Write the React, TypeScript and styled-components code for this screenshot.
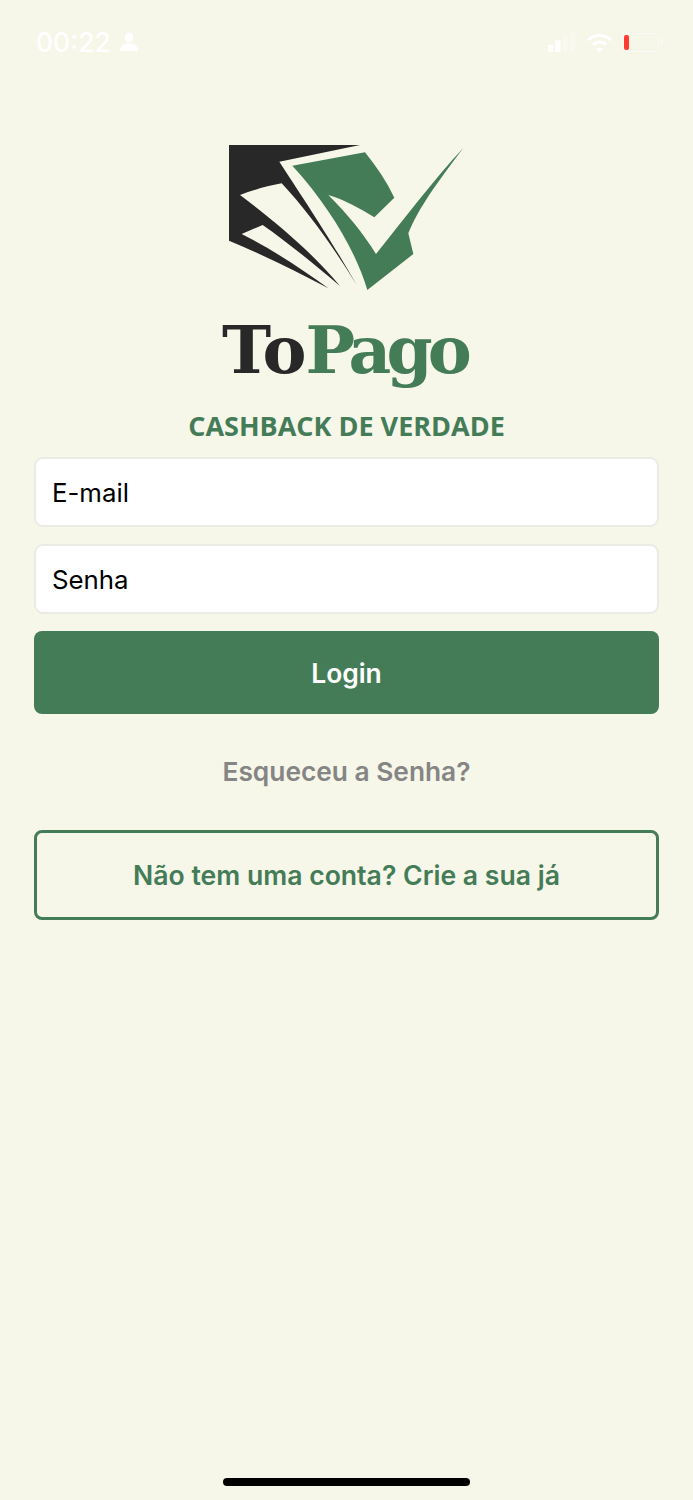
import styled, { createGlobalStyle } from "styled-components";

const GREEN = "#457c58";
const INK = "#282828";

const GlobalStyle = createGlobalStyle`
    * { box-sizing: border-box; }
    html, body { margin: 0; padding: 0; background: #f6f6e9; }
`;

export default function App() {
    return (
        <Screen>
            <GlobalStyle />
            <StatusBar>
                <TimeGroup>
                    <Clock>00:22</Clock>
                    <svg width="20" height="20" viewBox="0 0 20 20" fill="#fff">
                        <ellipse cx="10" cy="5.500" rx="4.200" ry="5" />
                        <path d="M1 19c0-5 3-7.500 9-7.500s9 2.500 9 7.500z" />
                    </svg>
                </TimeGroup>
                <StatusIcons>
                    <svg width="31" height="20" viewBox="1 0 30 22" fill="#fff">
                        <rect x="1" y="14" width="6" height="8" rx="1" />
                        <rect x="9" y="9" width="6" height="13" rx="1" />
                        <rect x="17" y="5" width="6" height="17" rx="1" opacity="0.3" />
                        <rect x="25" y="0" width="6" height="22" rx="1" opacity="0.3" />
                    </svg>
                    <svg width="27" height="21" viewBox="0 0 28 22" fill="none" stroke="#fff" strokeWidth="3.200">
                        <path d="M2 8.500c7-6.500 17-6.500 24 0" />
                        <path d="M7 13c4-3.500 10-3.500 14 0" />
                        <path d="M14 21.500l-3.600-4c2-1.500 5.200-1.500 7.200 0z" fill="#fff" stroke="none" />
                    </svg>
                    <BatteryGroup>
                        <Battery>
                            <BatteryLevel />
                        </Battery>
                        <BatteryNub />
                    </BatteryGroup>
                </StatusIcons>
            </StatusBar>

            <Brand>
                <LogoMark width="290" height="170" viewBox="0 0 870 510">
                    <path
                        fill={INK}
                        d="M87 45L480 45L238 95C300 190 400 340 470 465C400 350 320 240 245 160C200 168 160 180 120 195C220 270 340 370 420 468C340 400 260 335 188 285L125 312C220 360 310 420 385 475C290 425 190 375 87 332Z"
                    />
                    <path
                        fill={GREEN}
                        d="M277 107L495 67C530 110 560 155 583 203L523 262C480 235 435 210 385 195C440 250 490 310 528 372C610 270 700 150 790 54C710 160 655 235 625 310L640 372L502 480C470 370 390 230 277 107Z"
                    />
                </LogoMark>
                <Wordmark>
                    To<WordmarkAccent>Pago</WordmarkAccent>
                </Wordmark>
                <Tagline>CASHBACK DE VERDADE</Tagline>
            </Brand>

            <Form>
                <Field placeholder="E-mail" />
                <Field placeholder="Senha" type="password" />
                <LoginButton type="button">Login</LoginButton>
                <ForgotLink>Esqueceu a Senha?</ForgotLink>
                <SignupButton type="button">Não tem uma conta? Crie a sua já</SignupButton>
            </Form>

            <HomeIndicator />
        </Screen>
    );
}

const Screen = styled.main`
    display: flex;
    flex-direction: column;
    width: 693px;
    height: 1500px;
    background: #f6f6e9;
    font-family: Inter, "Liberation Sans", sans-serif;
    overflow: hidden;
`;

const StatusBar = styled.header`
    display: flex;
    align-items: center;
    justify-content: space-between;
    height: 30px;
    margin-top: 27px;
    padding: 0 30px 0 36px;
`;

const TimeGroup = styled.div`
    display: flex;
    align-items: center;
    gap: 8px;
`;

const Clock = styled.span`
    color: #fff;
    font-size: 26.500px;
    font-weight: 500;
    line-height: 30px;
`;

const StatusIcons = styled.div`
    display: flex;
    align-items: center;
    gap: 9px;
`;

const BatteryGroup = styled.div`
    display: flex;
    align-items: center;
    gap: 2px;
`;

const Battery = styled.div`
    display: flex;
    align-items: center;
    width: 37px;
    height: 19px;
    padding: 2px 1px;
    border: 1px solid #fbfbf5;
    border-radius: 5px;
`;

const BatteryLevel = styled.div`
    width: 5px;
    height: 15px;
    border-radius: 2px;
    background: #ff3b30;
`;

const BatteryNub = styled.div`
    width: 2px;
    height: 6px;
    border-radius: 1px;
    background: #fbfbf5;
`;

const Brand = styled.section`
    display: flex;
    flex-direction: column;
    align-items: center;
    margin-top: 73px;
`;

const LogoMark = styled.svg`
    margin-right: 3px;
`;

const Wordmark = styled.div`
    margin-top: 8px;
    margin-right: 4px;
    color: ${INK};
    font-family: "DejaVu Serif", "Liberation Serif", serif;
    font-size: 66px;
    font-weight: 700;
    line-height: 84px;
    letter-spacing: -1px;
`;

const WordmarkAccent = styled.span`
    color: ${GREEN};
    letter-spacing: -4.800px;
`;

const Tagline = styled.div`
    margin-top: 17px;
    color: ${GREEN};
    font-family: "Open Sans", sans-serif;
    font-size: 27px;
    font-weight: 700;
    line-height: 34px;
`;

const Form = styled.section`
    display: flex;
    flex-direction: column;
    margin-top: 14px;
    padding: 0 34px;
`;

const Field = styled.input`
    width: 100%;
    height: 70px;
    margin-bottom: 17px;
    padding: 0 16px;
    background: #fff;
    border: 2px solid #ebebe6;
    border-radius: 9px;
    font-family: inherit;
    font-size: 25.800px;
    color: #000;

    &::placeholder {
        color: #000;
        opacity: 1;
    }
`;

const LoginButton = styled.button`
    height: 83px;
    background: ${GREEN};
    border: none;
    border-radius: 8px;
    color: #fff;
    font-family: inherit;
    font-size: 26.400px;
    font-weight: 600;
`;

const ForgotLink = styled.div`
    margin-top: 42px;
    color: #858585;
    font-size: 26.300px;
    font-weight: 600;
    line-height: 32px;
    text-align: center;
`;

const SignupButton = styled.button`
    height: 90px;
    margin-top: 42px;
    background: transparent;
    border: 3px solid ${GREEN};
    border-radius: 8px;
    color: ${GREEN};
    font-family: inherit;
    font-size: 26.600px;
    font-weight: 600;
`;

const HomeIndicator = styled.div`
    align-self: center;
    width: 247px;
    height: 8px;
    margin-top: auto;
    margin-bottom: 14px;
    border-radius: 4px;
    background: #000;
`;
